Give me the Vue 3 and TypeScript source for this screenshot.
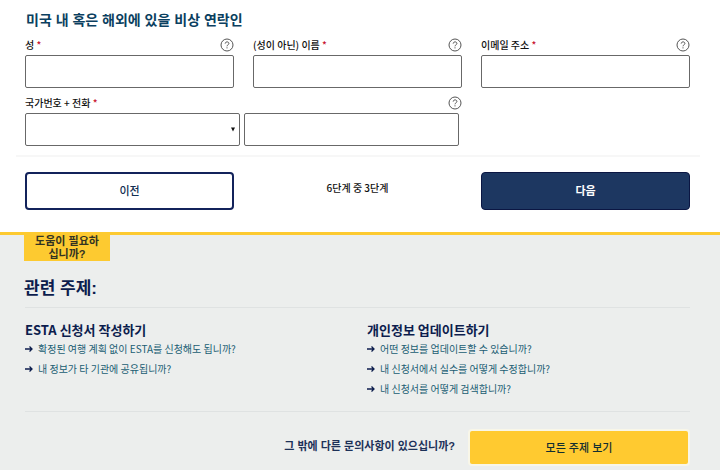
<script setup lang="ts">
import { ref } from 'vue'

interface Field {
  id: string
  label: string
  type: string
}

interface Topic {
  title: string
  links: string[]
}

const fields: Field[] = [
  { id: 'family-name', label: '성', type: 'text' },
  { id: 'first-name', label: '(성이 아닌) 이름', type: 'text' },
  { id: 'email', label: '이메일 주소', type: 'email' },
]

const topics: Topic[] = [
  {
    title: 'ESTA 신청서 작성하기',
    links: ['확정된 여행 계획 없이 ESTA를 신청해도 됩니까?', '내 정보가 타 기관에 공유됩니까?'],
  },
  {
    title: '개인정보 업데이트하기',
    links: [
      '어떤 정보를 업데이트할 수 있습니까?',
      '내 신청서에서 실수를 어떻게 수정합니까?',
      '내 신청서를 어떻게 검색합니까?',
    ],
  },
]

const values = ref<Record<string, string>>({})
const countryCode = ref('')
const phone = ref('')
</script>

<template>
  <div class="page">
    <form class="contact" @submit.prevent>
      <h2 class="contact-title">미국 내 혹은 해외에 있을 비상 연락인</h2>
      <div class="grid">
        <div v-for="field in fields" :key="field.id" class="field">
          <div class="label-row">
            <label :for="field.id">{{ field.label }} <span class="required">*</span></label>
            <button type="button" class="help">
              <svg viewBox="0 0 14 14" fill="none" stroke="currentColor">
                <circle cx="7" cy="7" r="6" />
                <path d="M5.2 5.6C5.2 3.3 8.9 3.3 8.9 5.5C8.9 6.8 7 6.8 7 8.3M7 9.3V10.4" />
              </svg>
            </button>
          </div>
          <input :id="field.id" v-model="values[field.id]" class="control" :type="field.type" />
        </div>
        <div class="field wide">
          <div class="label-row">
            <label for="country-code">국가번호 + 전화 <span class="required">*</span></label>
            <button type="button" class="help">
              <svg viewBox="0 0 14 14" fill="none" stroke="currentColor">
                <circle cx="7" cy="7" r="6" />
                <path d="M5.2 5.6C5.2 3.3 8.9 3.3 8.9 5.5C8.9 6.8 7 6.8 7 8.3M7 9.3V10.4" />
              </svg>
            </button>
          </div>
          <div class="phone">
            <div class="select-wrap">
              <select id="country-code" v-model="countryCode" class="control">
                <option value=""></option>
              </select>
              <svg class="caret" viewBox="0 0 4 5"><path d="M0 0.5H4L2 4.5Z" /></svg>
            </div>
            <input v-model="phone" class="control" type="tel" />
          </div>
        </div>
      </div>
      <div class="grid actions">
        <button type="button" class="button previous">이전</button>
        <span class="step">6단계 중 3단계</span>
        <button type="submit" class="button next">다음</button>
      </div>
    </form>

    <section class="support">
      <div class="tab">도움이 필요하십니까?</div>
      <h2 class="support-title">관련 주제:</h2>
      <div class="topics">
        <div v-for="topic in topics" :key="topic.title">
          <h3>{{ topic.title }}</h3>
          <ul>
            <li v-for="link in topic.links" :key="link">
              <svg class="arrow" viewBox="0 0 8 8" fill="none" stroke="currentColor">
                <path d="M0 4H7M4.5 1.5L7 4L4.5 6.5" />
              </svg>
              <a href="#">{{ link }}</a>
            </li>
          </ul>
        </div>
      </div>
      <div class="more">
        <p>그 밖에 다른 문의사항이 있으십니까?</p>
        <button type="button" class="button all">모든 주제 보기</button>
      </div>
    </section>
  </div>
</template>

<style>
body {
  margin: 0;
  background: #eceeed;
}
</style>

<style scoped>
.page,
.page button,
.page input,
.page select {
  font-family: "Liberation Sans", "Noto Sans CJK KR", sans-serif;
}

.page .label-row,
.page .step,
.page h3,
.page li {
  font-family: "Noto Sans CJK KR", sans-serif;
}

.page * {
  box-sizing: border-box;
}

h2,
h3,
p,
ul {
  margin: 0;
  padding: 0;
}

.contact {
  padding-top: 10px;
  background: #fff;
  border-bottom: 3px solid #fdca30;
}

.contact-title {
  padding-left: 26px;
  font-size: 14px;
  line-height: 20px;
  font-weight: 700;
  color: #0b3f60;
}

.grid {
  display: grid;
  grid-template-columns: repeat(3, 1fr);
  column-gap: 19px;
  row-gap: 8px;
  padding: 8px 30px 0 25px;
}

.wide {
  grid-column: span 2;
}

.label-row {
  display: flex;
  justify-content: space-between;
  align-items: center;
  height: 14px;
  margin-bottom: 3px;
  font-size: 10px;
  font-weight: 500;
  line-height: 14px;
  color: #111;
}

.required {
  color: #c8102e;
}

.help {
  display: flex;
  width: 14px;
  height: 14px;
  padding: 0;
  border: 0;
  background: none;
  color: #555;
}

.help svg {
  width: 14px;
  height: 14px;
}

.control {
  display: block;
  width: 100%;
  height: 33px;
  margin: 0;
  padding: 0 8px;
  border: 1px solid #686868;
  border-radius: 2px;
  background: #fff;
  font-size: 11px;
  appearance: none;
}

.phone {
  display: grid;
  grid-template-columns: 1fr 1fr;
  gap: 4px;
  padding-right: 3px;
}

.select-wrap {
  position: relative;
}

.caret {
  position: absolute;
  top: 14px;
  right: 5px;
  width: 4px;
  height: 5px;
  fill: #111;
  pointer-events: none;
}

.actions {
  position: relative;
  margin-top: 9px;
  padding-top: 17px;
  padding-bottom: 22px;
  align-items: center;
}

.actions::before {
  content: "";
  position: absolute;
  top: 0;
  left: 16px;
  right: 20px;
  height: 2px;
  background: #f7f7f7;
}

.button {
  height: 38px;
  padding: 0 0 2px;
  border: 2px solid #13235b;
  border-radius: 4px;
  font-size: 11px;
  font-weight: 500;
}

.previous {
  background: #fff;
  color: #112e51;
}

.next {
  border: 1px solid #0b1643;
  background: #1d3761;
  color: #fff;
  font-weight: 700;
}

.step {
  padding-bottom: 6px;
  text-align: center;
  font-size: 10px;
  font-weight: 500;
  line-height: 14px;
  color: #111;
}

.support {
  padding: 0 30px 5px 25px;
  background: #eceeed;
  color: #0c1d4d;
}

.tab {
  width: 86px;
  margin-left: -1px;
  padding: 0 8px;
  background: #fdca30;
  font-size: 11px;
  font-weight: 700;
  line-height: 13px;
  text-align: center;
  color: #333322;
}

.support-title {
  margin: 16px 0 6px -1px;
  font-size: 17px;
  font-weight: 700;
  line-height: 24px;
}

.topics {
  display: grid;
  grid-template-columns: 1fr 1fr;
  gap: 19px;
  padding: 12px 0;
  border-top: 1px solid #dfe2e2;
  border-bottom: 1px solid #dfe2e2;
}

h3 {
  font-size: 13px;
  font-weight: 700;
  line-height: 19px;
}

ul {
  list-style: none;
}

li {
  display: flex;
  align-items: center;
  gap: 5px;
  height: 20px;
}

.arrow {
  width: 8px;
  height: 8px;
  stroke-width: 1.3;
}

li a {
  font-size: 10px;
  line-height: 16px;
  color: #205d73;
  text-decoration: none;
}

.more {
  display: flex;
  justify-content: flex-end;
  align-items: center;
  gap: 13px;
  padding-top: 17px;
}

.more p {
  padding-bottom: 4px;
  font-size: 11px;
  font-weight: 700;
  line-height: 16px;
  color: #1d3158;
}

.all {
  width: 222px;
  height: 37px;
  border-color: #f8f6e8;
  background: #ffca30;
  color: #112e31;
}
</style>
